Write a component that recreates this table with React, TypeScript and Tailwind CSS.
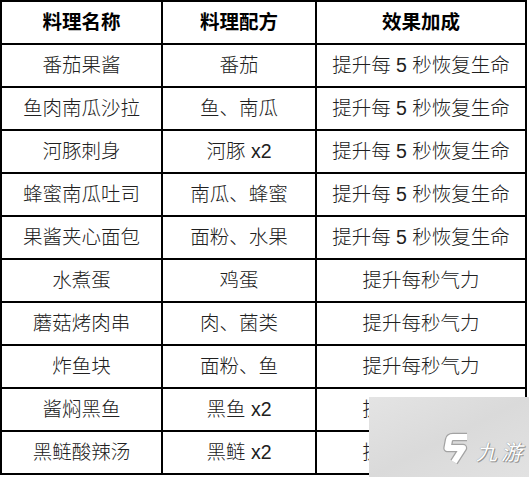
const header = ['料理名称', '料理配方', '效果加成'];

const rows: [string, string, string][] = [
  ['番茄果酱', '番茄', '提升每 5 秒恢复生命'],
  ['鱼肉南瓜沙拉', '鱼、南瓜', '提升每 5 秒恢复生命'],
  ['河豚刺身', '河豚 x2', '提升每 5 秒恢复生命'],
  ['蜂蜜南瓜吐司', '南瓜、蜂蜜', '提升每 5 秒恢复生命'],
  ['果酱夹心面包', '面粉、水果', '提升每 5 秒恢复生命'],
  ['水煮蛋', '鸡蛋', '提升每秒气力'],
  ['蘑菇烤肉串', '肉、菌类', '提升每秒气力'],
  ['炸鱼块', '面粉、鱼', '提升每秒气力'],
  ['酱焖黑鱼', '黑鱼 x2', '提升每秒气力'],
  ['黑鲢酸辣汤', '黑鲢 x2', '提升每秒气力'],
];

function Cell({ children, bold }: { children: string; bold?: boolean }) {
  return (
    <div
      className={`flex h-[43px] items-center justify-center border-r-2 border-b-2 border-black whitespace-nowrap text-[19.5px] ${
        bold ? 'font-bold text-black' : 'font-light text-[#202020]'
      }`}
    >
      {children}
    </div>
  );
}

// watermark over the bottom-right corner
function Watermark() {
  const d = 'M26 5 H12 Q8.5 5 8 8 L6.5 16 H22 L13 30';
  return (
    <div className="absolute left-[369px] top-[397px] h-[80px] w-[160px] bg-gradient-to-br from-[#e4e4e4] via-[#dadada] to-[#e2e2e2]">
      <svg className="absolute left-[72px] top-[35px]" width="30" height="34" viewBox="0 0 30 34">
        <path d={d} fill="none" stroke="#a3a3a3" strokeWidth="8.5" strokeLinejoin="round" />
        <path d={d} fill="none" stroke="#ffffff" strokeWidth="6" strokeLinejoin="round" />
      </svg>
      <span className="absolute left-[107px] top-[45px] text-[21px] italic leading-none tracking-[4px] text-white [text-shadow:0_0_1px_#777,1px_1px_0_#999]">
        九游
      </span>
    </div>
  );
}

export default function App() {
  return (
    <div
      className="relative h-[477px] w-[529px] overflow-hidden bg-white"
      style={{ fontFamily: '"Liberation Sans", "Noto Sans CJK SC", sans-serif' }}
    >
      <div className="grid w-[527px] grid-cols-[161px_154px_210px] border-t-2 border-l-2 border-black leading-none">
        {header.map((h) => (
          <Cell key={h} bold>
            {h}
          </Cell>
        ))}
        {rows.map((r, i) =>
          r.map((c, j) => <Cell key={`${i}-${j}`}>{c}</Cell>)
        )}
      </div>
      <Watermark />
    </div>
  );
}
